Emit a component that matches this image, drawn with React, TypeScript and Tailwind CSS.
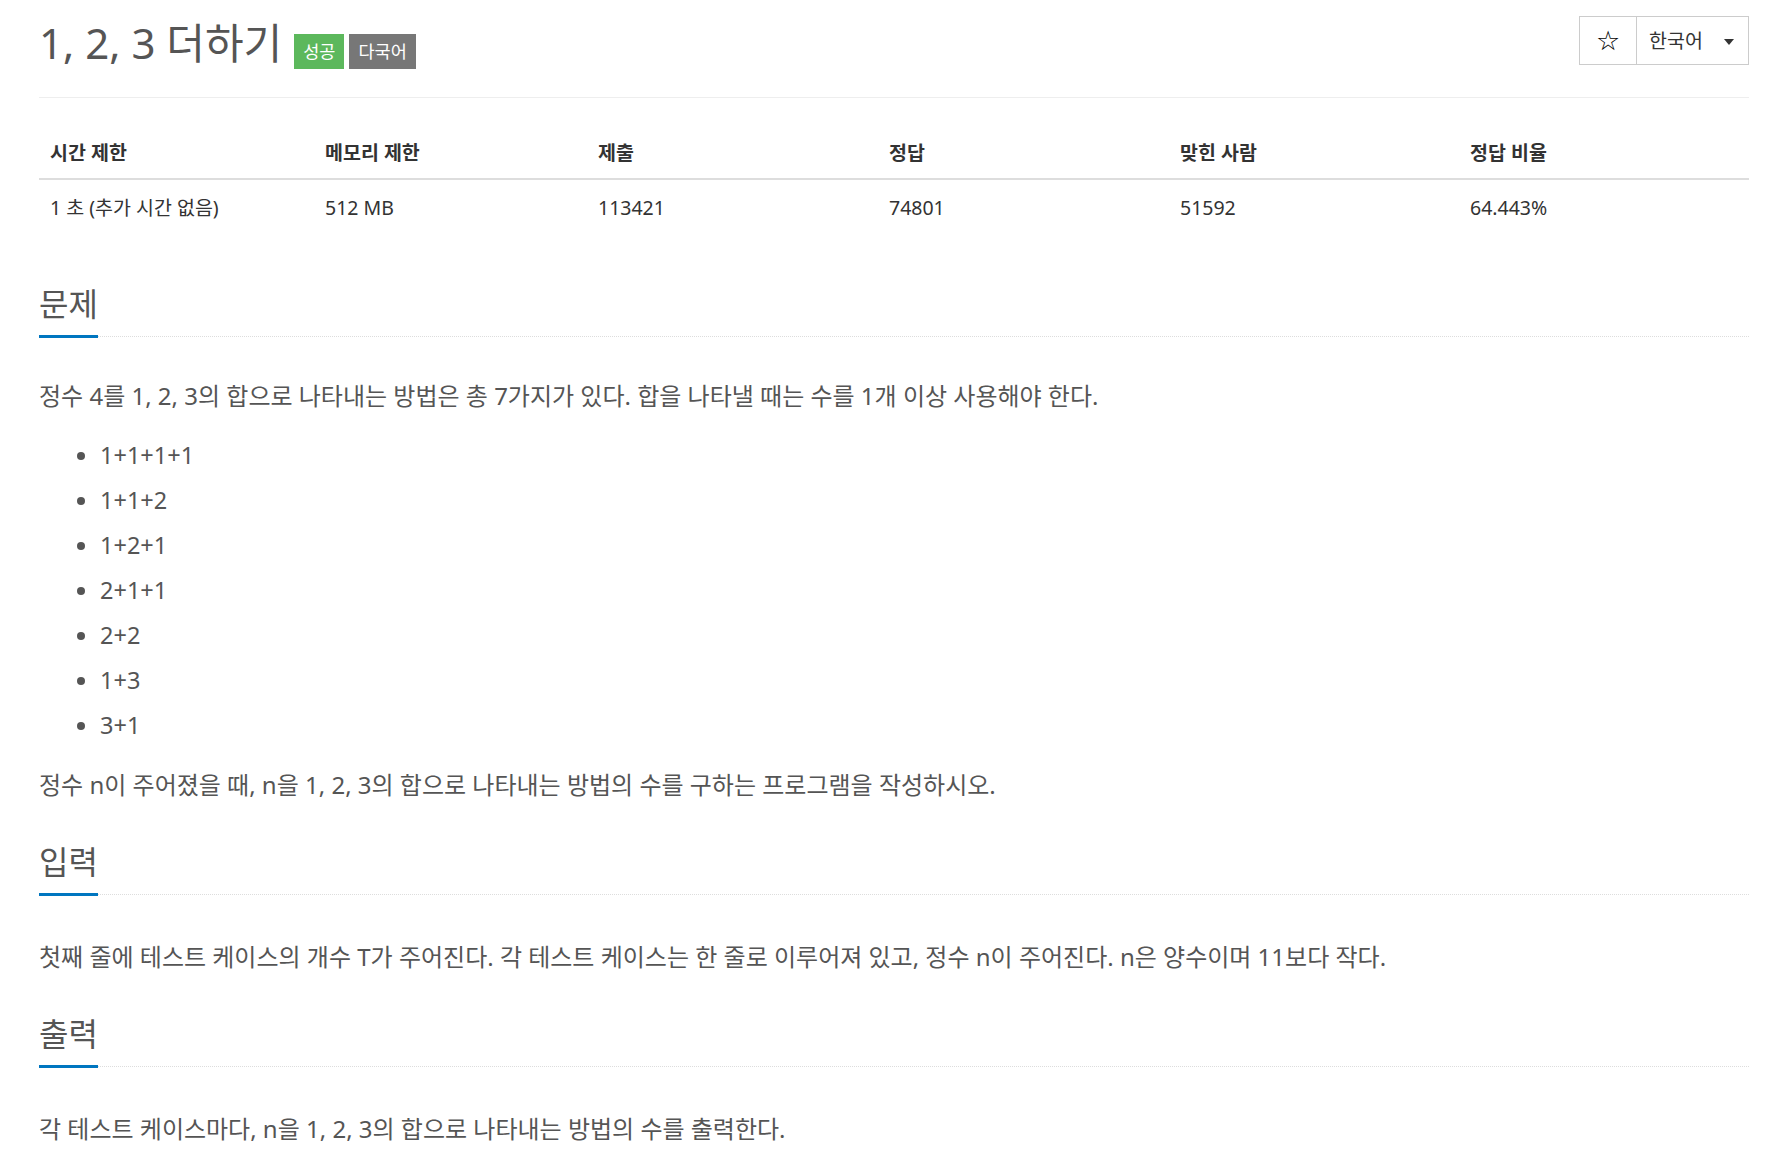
import React from "react";

const font = "font-['Noto_Sans','Noto_Sans_CJK_KR',sans-serif]";

function Section({ title, children, first }: { title: string; children: React.ReactNode; first?: boolean }) {
  return (
    <section className={first ? "mt-[54px]" : "mt-[41px]"}>
      <div className="border-b border-dotted border-[#dddddd]">
        <h2 className="inline-block -mb-[2px] border-b-[3px] border-[#0076c0] pb-[11px] text-[32px] leading-[40px] text-[#555555] font-normal">
          {title}
        </h2>
      </div>
      <div className={`${first ? "mt-[43px]" : "mt-[46px]"} text-[24px] leading-[32px] text-[#555555]`}>{children}</div>
    </section>
  );
}

export default function App() {
  const stats = [
    ["시간 제한", "1 초 (추가 시간 없음)"],
    ["메모리 제한", "512 MB"],
    ["제출", "113421"],
    ["정답", "74801"],
    ["맞힌 사람", "51592"],
    ["정답 비율", "64.443%"],
  ];
  const items = ["1+1+1+1", "1+1+2", "1+2+1", "2+1+1", "2+2", "1+3", "3+1"];
  return (
    <div className={`${font} min-h-[1163px] w-full bg-white pl-[39px] pr-[22px]`}>
      <header className="flex h-[98px] items-start justify-between border-b border-[#eeeeee]">
        <div className="flex items-start">
          <h1 className="mt-[18px] text-[42px] leading-[50px] font-normal text-[#555555]">1, 2, 3 더하기</h1>
          <div className="ml-[12px] mt-[34px] flex gap-[5px] text-[17.5px] leading-[35px] text-white">
            <span className="h-[35px] bg-[#5cb85c] px-[9px]">성공</span>
            <span className="h-[35px] bg-[#777777] px-[9px]">다국어</span>
          </div>
        </div>
        <div className="mt-[16px] flex h-[49px] border border-[#cccccc] text-[#333333]">
          <div className="flex w-[57px] items-center justify-center border-r border-[#cccccc] text-[27px] leading-none text-black font-['DejaVu_Sans',sans-serif]">
            ☆
          </div>
          <div className="flex w-[111px] items-center pl-[12px] text-[19.5px]">
            <span>한국어</span>
            <span className="ml-[21px] mt-[2px] h-0 w-0 border-l-[5px] border-r-[5px] border-t-[6px] border-l-transparent border-r-transparent border-t-[#333333]" />
          </div>
        </div>
      </header>

      <div className="mt-[32px] text-[19.5px] leading-[25px] text-[#333333]">
        <div className="grid grid-cols-[275px_273px_291px_291px_290px_1fr] border-b-2 border-[#dddddd]">
          {stats.map(([h]) => (
            <div key={h} className="px-[11px] pt-[10px] pb-[13px] font-bold">
              {h}
            </div>
          ))}
        </div>
        <div className="grid grid-cols-[275px_273px_291px_291px_290px_1fr]">
          {stats.map(([h, v]) => (
            <div key={h} className="px-[11px] pt-[15px] pb-[10px]">
              {v}
            </div>
          ))}
        </div>
      </div>

      <Section title="문제" first>
        <p className="mb-[21px]">
          정수 4를 1, 2, 3의 합으로 나타내는 방법은 총 7가지가 있다. 합을 나타낼 때는 수를 1개 이상 사용해야 한다.
        </p>
        <ul className="mb-[21px] list-disc pl-[61px] text-[23.5px]">
          {items.map((it, i) => (
            <li key={i} className="leading-[45px] marker:text-[#555555]">
              {it}
            </li>
          ))}
        </ul>
        <p>정수 n이 주어졌을 때, n을 1, 2, 3의 합으로 나타내는 방법의 수를 구하는 프로그램을 작성하시오.</p>
      </Section>

      <Section title="입력">
        <p>
          첫째 줄에 테스트 케이스의 개수 T가 주어진다. 각 테스트 케이스는 한 줄로 이루어져 있고, 정수 n이 주어진다. n은 양수이며 11보다 작다.
        </p>
      </Section>

      <Section title="출력">
        <p>각 테스트 케이스마다, n을 1, 2, 3의 합으로 나타내는 방법의 수를 출력한다.</p>
      </Section>
    </div>
  );
}
